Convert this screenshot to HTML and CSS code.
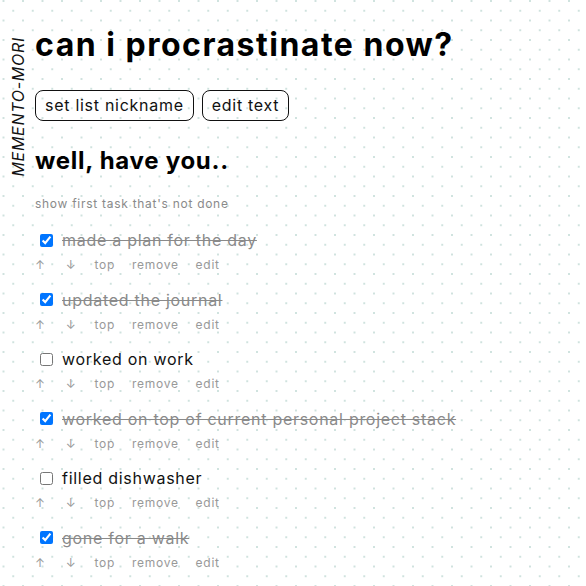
FILE: index.html
```html
<!DOCTYPE html>
<html lang="en">
<head>
<meta charset="utf-8">
<title>can i procrastinate now?</title>
<link rel="stylesheet" href="styles.css">
</head>
<body>
<div class="page">
  <aside class="side"><span class="brand">MEMENTO-MORI</span></aside>
  <main class="main">
    <h1 class="title">can i procrastinate now?</h1>
    <div class="buttons">
      <button class="btn">set list nickname</button>
      <button class="btn">edit text</button>
    </div>
    <h2 class="subtitle">well, have you..</h2>
    <div class="filter">show first task that's not done</div>
    <ul class="tasks">
      <li class="task done">
        <label class="task-line"><input type="checkbox" checked><span class="task-text">made a plan for the day</span></label>
        <div class="actions"><span class="act arrow">↑</span><span class="act arrow">↓</span><span class="act">top</span><span class="act">remove</span><span class="act">edit</span></div>
      </li>
      <li class="task done">
        <label class="task-line"><input type="checkbox" checked><span class="task-text">updated the journal</span></label>
        <div class="actions"><span class="act arrow">↑</span><span class="act arrow">↓</span><span class="act">top</span><span class="act">remove</span><span class="act">edit</span></div>
      </li>
      <li class="task">
        <label class="task-line"><input type="checkbox"><span class="task-text">worked on work</span></label>
        <div class="actions"><span class="act arrow">↑</span><span class="act arrow">↓</span><span class="act">top</span><span class="act">remove</span><span class="act">edit</span></div>
      </li>
      <li class="task done">
        <label class="task-line"><input type="checkbox" checked><span class="task-text">worked on top of current personal project stack</span></label>
        <div class="actions"><span class="act arrow">↑</span><span class="act arrow">↓</span><span class="act">top</span><span class="act">remove</span><span class="act">edit</span></div>
      </li>
      <li class="task">
        <label class="task-line"><input type="checkbox"><span class="task-text">filled dishwasher</span></label>
        <div class="actions"><span class="act arrow">↑</span><span class="act arrow">↓</span><span class="act">top</span><span class="act">remove</span><span class="act">edit</span></div>
      </li>
      <li class="task done">
        <label class="task-line"><input type="checkbox" checked><span class="task-text">gone for a walk</span></label>
        <div class="actions"><span class="act arrow">↑</span><span class="act arrow">↓</span><span class="act">top</span><span class="act">remove</span><span class="act">edit</span></div>
      </li>
    </ul>
  </main>
</div>
</body>
</html>
```
FILE: styles.css
```css
html, body {
  margin: 0;
  padding: 0;
}
body {
  font-family: Inter, "Noto Sans", sans-serif;
  letter-spacing: 0.045em;
  color: #000;
  background-color: #fff;
  background-image:
    radial-gradient(circle, #cfe2de 0.9px, transparent 1.3px),
    radial-gradient(circle, #cfe2de 0.9px, transparent 1.3px);
  background-size: 19.5px 19.5px;
  background-position: 3.5px 1px, 13.25px 10.75px;
  min-height: 586px;
}
.page {
  display: flex;
  padding: 0 0 0 8px;
}
.side {
  width: 27px;
  padding-top: 37px;
}
.brand {
  display: block;
  writing-mode: vertical-rl;
  transform: rotate(180deg);
  font-style: italic;
  font-size: 16px;
  color: #111;
}
.main {
  flex: 1;
}
.title {
  font-size: 32px;
  font-weight: 700;
  margin: 26px 0 0;
  line-height: 38px;
  letter-spacing: 0.047em;
}
.buttons {
  display: flex;
  gap: 8px;
  margin-top: 26px;
}
.btn {
  font-family: Inter, "Noto Sans", sans-serif;
  letter-spacing: 0.045em;
  font-size: 16px;
  color: #111;
  background: transparent;
  border: 1px solid #111;
  border-radius: 8px;
  padding: 5px 9px;
  line-height: 19px;
}
.subtitle {
  font-size: 24px;
  font-weight: 700;
  margin: 25px 0 0;
  line-height: 30px;
}
.filter {
  font-size: 12px;
  color: #8a8a8a;
  margin-top: 20px;
  line-height: 16px;
}
.tasks {
  list-style: none;
  margin: 17px 0 0;
  padding: 0;
}
.task {
  height: 59.6px;
}
.task-line {
  display: flex;
  align-items: center;
  height: 22px;
}
.task-line input {
  width: 13px;
  height: 13px;
  margin: 0 9px 0 5px;
}
.task-text {
  font-size: 16px;
  color: #111;
}
.task.done .task-text {
  color: #8a8a8a;
  text-decoration: line-through;
}
.actions {
  display: flex;
  font-size: 12px;
  color: #999;
  line-height: 16px;
  margin-top: 6px;
}
.act {
  margin-right: 17px;
}
.arrow {
  margin-right: 20px;
}
.arrow + .arrow {
  margin-right: 18px;
}
```
